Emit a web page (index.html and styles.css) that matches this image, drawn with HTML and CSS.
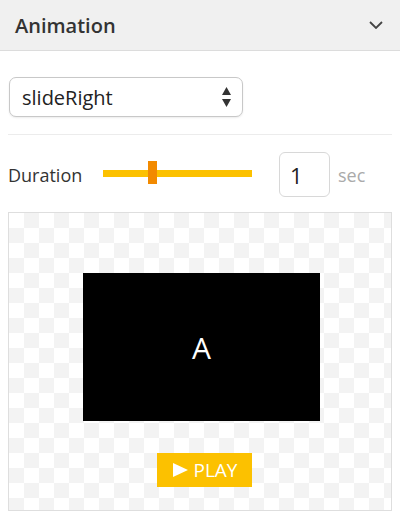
FILE: index.html
```html
<!DOCTYPE html>
<html lang="en">
<head>
    <meta charset="UTF-8">
    <meta name="viewport" content="width=device-width, initial-scale=1.0">
    <title>Animation</title>
    <link rel="stylesheet" href="styles.css">
</head>
<body>
    <div class="panel-header">
        <h2 class="panel-title">Animation</h2>
        <svg class="chevron" width="14" height="8" viewBox="0 0 14 8">
            <polyline points="1,1 7,7 13,1" fill="none" stroke="#444" stroke-width="1.8"/>
        </svg>
    </div>

    <div class="panel-body">
        <div class="select-row">
            <div class="select-wrap">
                <select class="anim-select" id="anim_type">
                    <option>slideRight</option>
                    <option>slideLeft</option>
                    <option>fadeIn</option>
                </select>
                <svg class="select-arrows" width="9" height="20" viewBox="0 0 9 20">
                    <polygon points="4.5,0 9,8 0,8" fill="#333"/>
                    <polygon points="0,12 9,12 4.5,20" fill="#333"/>
                </svg>
            </div>
        </div>

        <div class="duration-row">
            <label class="duration-label" for="duration">Duration</label>
            <div class="slider">
                <div class="slider-track"></div>
                <div class="slider-thumb"></div>
            </div>
            <input type="text" class="duration-input" id="duration" value="1">
            <span class="unit">sec</span>
        </div>

        <div class="preview">
            <div class="stage">A</div>
            <button class="play-button" id="play_button">
                <svg width="15" height="14" viewBox="0 0 15 14">
                    <polygon points="0,0 15,7 0,14" fill="#fff"/>
                </svg>
                PLAY
            </button>
        </div>
    </div>
</body>
</html>
```

FILE: styles.css
```css
body {
    margin: 0;
    background-color: #fff;
    font-family: "Open Sans", "Liberation Sans", sans-serif;
    color: #333;
}

.panel-header {
    display: flex;
    align-items: center;
    justify-content: space-between;
    height: 50px;
    padding: 0 17px 0 15px;
    background-color: #f0f0f0;
    border-bottom: 1px solid #dcdcdc;
}

.panel-title {
    margin: 0;
    font-size: 20px;
    font-weight: 600;
    color: #333;
}

.panel-body {
    padding: 0 8px;
}

.select-row {
    padding: 26px 0 17px;
    border-bottom: 1px solid #ececec;
}

.select-wrap {
    position: relative;
    width: 234px;
    margin-left: 1px;
}

.anim-select {
    appearance: none;
    -webkit-appearance: none;
    display: block;
    width: 100%;
    height: 40px;
    padding: 0 12px;
    box-sizing: border-box;
    font-family: inherit;
    font-size: 20px;
    color: #222;
    background: #fff;
    border: 1px solid #c8c8c8;
    border-radius: 7px;
    box-shadow: 0 1px 2px rgba(0, 0, 0, 0.08);
}

.select-arrows {
    position: absolute;
    right: 12px;
    top: 10px;
    pointer-events: none;
}

.duration-row {
    display: flex;
    align-items: center;
    margin-top: 17px;
}

.duration-label {
    font-size: 18px;
    color: #333;
    width: 95px;
}

.slider {
    position: relative;
    width: 149px;
    height: 23px;
    margin-top: 5px;
}

.slider-track {
    position: absolute;
    left: 0;
    right: 0;
    top: 4px;
    height: 7px;
    background-color: #fcc100;
}

.slider-thumb {
    position: absolute;
    left: 45px;
    top: -5px;
    width: 9px;
    height: 23px;
    background-color: #f28a00;
}

.duration-input {
    width: 51px;
    height: 45px;
    margin-left: 27px;
    padding: 0 10px;
    box-sizing: border-box;
    font-family: inherit;
    font-size: 22px;
    color: #222;
    border: 1px solid #d8d8d8;
    border-radius: 6px;
}

.unit {
    margin-left: 8px;
    font-size: 18px;
    color: #aaa;
}

.preview {
    display: flex;
    flex-direction: column;
    align-items: center;
    height: 299px;
    margin-top: 15px;
    padding: 60px 0 0 3px;
    box-sizing: border-box;
    border: 1px solid #dedede;
    background-color: #fff;
    background-image: conic-gradient(#f3f3f3 25%, #fff 0 50%, #f3f3f3 0 75%, #fff 0);
    background-size: 30px 30px;
}

.stage {
    display: flex;
    align-items: center;
    justify-content: center;
    width: 237px;
    height: 148px;
    background-color: #000;
    color: #fff;
    font-size: 30px;
}

.play-button {
    display: flex;
    align-items: center;
    gap: 6px;
    height: 34px;
    margin-top: 32px;
    margin-left: 6px;
    padding: 0 15px 0 16px;
    font-family: inherit;
    font-size: 19px;
    color: #fff;
    background-color: #fcc100;
    border: none;
    cursor: pointer;
}
```
